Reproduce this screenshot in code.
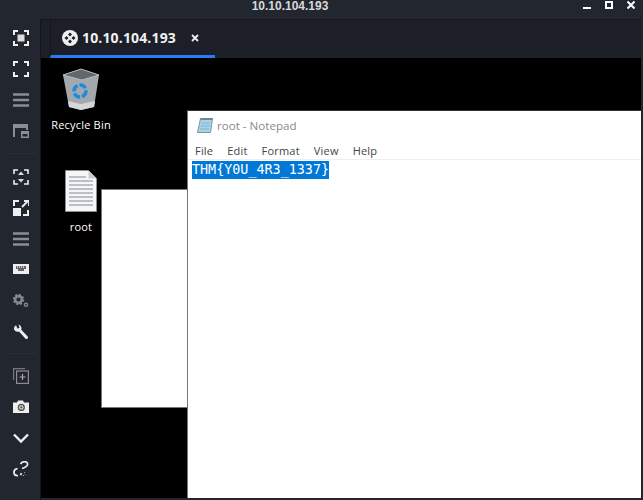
<div class="app">
	<header class="titlebar">
		<span class="titlebar__title">10.10.104.193</span>
		<div class="titlebar__controls">
			<svg width="10" height="10" viewBox="0 0 10 10"><rect x="1" y="7" width="8" height="2" fill="#fff" /></svg>
			<svg width="10" height="10" viewBox="0 0 10 10"><rect x="2" y="2" width="6" height="6" fill="none" stroke="#fff" stroke-width="2" /></svg>
			<svg width="10" height="10" viewBox="0 0 10 10"><path d="M1.500 1.500l7 7M8.500 1.500l-7 7" stroke="#fff" stroke-width="2" /></svg>
		</div>
	</header>

	<div class="main">
		<nav class="rail">
			<div class="rail__group">
				<svg class="ico" viewBox="0 0 16 16"><path d="M1 5V1h4M11 1h4v4M15 11v4h-4M5 15H1v-4" fill="none" stroke="#eee" stroke-width="2" /><rect x="4.500" y="4.500" width="7" height="7" fill="#ddd" /></svg>
				<svg class="ico" viewBox="0 0 16 16"><path d="M1 5V1h4M11 1h4v4M15 11v4h-4M5 15H1v-4" fill="none" stroke="#eee" stroke-width="2" /></svg>
				<svg class="ico" viewBox="0 0 16 16"><path d="M0 2.500h16M0 8h16M0 13.500h16" stroke="#8b8d92" stroke-width="2.400" /></svg>
				<svg class="ico" viewBox="0 0 16 16"><path d="M1 14V2h13v5" fill="none" stroke="#8b8d92" stroke-width="2" /><path d="M1 2h14v3H1z" fill="#8b8d92" /><rect x="8" y="8" width="8" height="7" fill="#8b8d92" /><rect x="9.500" y="11" width="5" height="2.500" fill="#22262f" /></svg>
			</div>
			<div class="rail__sep rail__sep--first"></div>
			<div class="rail__group">
				<svg class="ico" viewBox="0 0 16 16"><path d="M1 5V1h4M11 1h4v4M15 11v4h-4M5 15H1v-4" fill="none" stroke="#eee" stroke-width="1.600" /><path d="M8 2.500l3 3.500H5zM8 13.500L5 10h6z" fill="#ddd" /></svg>
				<svg class="ico" viewBox="0 0 16 16"><path d="M6 1H1v5M15 10v5h-5" fill="none" stroke="#eee" stroke-width="2" /><rect x="0" y="8" width="8" height="8" fill="#eee" /><path d="M9 7l6-6M11 1h5v5" fill="none" stroke="#eee" stroke-width="1.800" /></svg>
				<svg class="ico" viewBox="0 0 16 16"><path d="M0 2.500h16M0 8h16M0 13.500h16" stroke="#8b8d92" stroke-width="2.400" /></svg>
				<svg class="ico" viewBox="0 0 16 16"><rect x="0" y="2" width="16" height="10" fill="#eee" /><path d="M3 4h10v3h-2v2H5V7H3z" fill="#666" /><path d="M4.500 4v2M6.500 4v2M8.500 4v2M10.500 4v2" stroke="#ddd" stroke-width="0.800" /></svg>
				<svg class="ico" viewBox="0 0 16 16"><circle cx="5.500" cy="6.500" r="3.400" fill="none" stroke="#85878c" stroke-width="2.600" /><circle cx="5.500" cy="6.500" r="5" fill="none" stroke="#85878c" stroke-width="1.500" stroke-dasharray="2 1.900" /><circle cx="13" cy="11.800" r="1.600" fill="none" stroke="#85878c" stroke-width="1.400" /></svg>
				<svg class="ico" viewBox="0 0 16 16"><path d="M3 1.200a4 4 0 0 0-1.800 4.600 4 4 0 0 0 4.800 1.600l6.300 7a1.400 1.400 0 0 0 2.400-1.800L8.300 5.800A4 4 0 0 0 5.400.6L6.600 3.400 4.600 4.800z" fill="#eee" /></svg>
			</div>
			<div class="rail__sep rail__sep--second"></div>
			<div class="rail__group">
				<svg class="ico" viewBox="0 0 16 16"><path d="M0.600 12V0.600H12" fill="none" stroke="#77797f" stroke-width="1.200" /><rect x="3.600" y="3" width="11.800" height="12.400" fill="#22262f" stroke="#8b8d92" stroke-width="1.200" /><path d="M9.500 6v6M6.500 9h6" stroke="#aaa" stroke-width="1.200" /></svg>
				<svg class="ico" viewBox="0 0 16 16"><path d="M0 3.500h4l1-2h5l1 2h5V14H0z" fill="#eee" /><circle cx="8.300" cy="8.400" r="3.600" fill="#555" /><circle cx="8.300" cy="8.400" r="2.200" fill="#eee" /><circle cx="8.300" cy="8.400" r="1.200" fill="#555" /></svg>
				<svg class="ico" viewBox="0 0 16 16"><path d="M1 4.500l7 7 7-7" fill="none" stroke="#eee" stroke-width="2.400" /></svg>
				<svg class="ico" viewBox="0 0 16 16"><path d="M4.500 7.500C2 8 .8 10 1 11.800c.2 2 2 3 4 2.800M7.500 14.200l1-2M9 7.500c2.500-.8 5.500-2 5.600-4.200C14.700 1.500 13 .4 11 .6 9.400.8 8.300 1.600 7.500 3" fill="none" stroke="#eee" stroke-width="1.700" /><path d="M11 11.500h.8M12 13.500l.6.6M10.500 14v1" stroke="#bbb" stroke-width="1" /></svg>
			</div>
		</nav>

		<section class="session">
			<div class="tabs">
				<div class="tab">
					<svg width="16" height="16" viewBox="0 0 16 16"><circle cx="8" cy="8" r="8" fill="#eee" /><path d="M8 2.500l2 2-2 2-2-2zM8 9.500l2 2-2 2-2-2zM4.500 6l2 2-2 2-2-2zM11.500 6l2 2-2 2-2-2z" fill="#1c1f27" /></svg>
					<span class="tab__label">10.10.104.193</span>
					<svg class="tab__close" width="8" height="8" viewBox="0 0 8 8"><path d="M1 1l6 6M7 1L1 7" stroke="#eee" stroke-width="1.800" /></svg>
				</div>
			</div>

			<div class="desktop">
				<div class="shortcut shortcut--bin">
					<svg width="38" height="42" viewBox="0 0 38 42">
						<path d="M1 7L19 1l18 6-5 32-13 3-12-3z" fill="#a3a8ac" />
						<path d="M1 7l18-6 18 6-17 5z" fill="#62676b" stroke="#b4b8bb" stroke-width="1" />
						<path d="M6 33l13 3 14-3-1 6-13 3-12-3z" fill="#d4d6d8" />
						<circle cx="18" cy="23" r="6" fill="none" stroke="#1c8adf" stroke-width="3.400" stroke-dasharray="7 2" />
					</svg>
					<span>Recycle Bin</span>
				</div>
				<div class="shortcut shortcut--root">
					<svg width="32" height="42" viewBox="0 0 32 42">
						<path d="M.5.500h23l8 8v33H.5z" fill="#f5f6f8" stroke="#8b8e93" />
						<path d="M23.500.500v8h8z" fill="#c9ccd0" />
						<path d="M4 7h17M4 11h24M4 15h24M4 19h24M4 23h24M4 27h24M4 31h24M4 35h24" stroke="#a9adb8" stroke-width="1.400" />
					</svg>
					<span>root</span>
				</div>

				<div class="blank"></div>

				<div class="notepad">
					<div class="notepad__title">
						<svg width="16" height="16" viewBox="0 0 16 16">
							<path d="M3.500 1.500h12l-2 14H.5z" fill="#a9d3e6" stroke="#7d96a3" />
							<path d="M3.500 1h12v2h-12z" fill="#6f8794" />
							<path d="M4 6h9M3.500 9h9M3 12h9" stroke="#83b3cb" />
						</svg>
						<span>root - Notepad</span>
					</div>
					<div class="notepad__menu">
						<span>File</span><span>Edit</span><span>Format</span><span>View</span><span>Help</span>
					</div>
					<div class="notepad__body"><span class="selected">THM&#123;Y0U_4R3_1337&#125;</span></div>
				</div>
			</div>
		</section>
	</div>
</div>

<style>
	:global(body) {
		margin: 0;
		background: #22262f;
	}

	.app {
		width: 643px;
		height: 500px;
		display: flex;
		flex-direction: column;
		overflow: hidden;
		background: #22262f;
		font-family: 'Liberation Sans', sans-serif;
	}

	.titlebar {
		height: 19px;
		flex: none;
		position: relative;
		display: flex;
		justify-content: center;
		align-items: center;
		padding-right: 63px;
	}

	.titlebar__title {
		color: #d8d9db;
		font-size: 12px;
		font-weight: 700;
		margin-top: -7px;
	}

	.titlebar__controls {
		position: absolute;
		right: 7px;
		top: 0;
		display: flex;
		gap: 12px;
	}

	.main {
		flex: 1;
		display: flex;
		min-height: 0;
	}

	.rail {
		width: 41px;
		flex: none;
		display: flex;
		flex-direction: column;
		align-items: center;
		padding: 11px 0 0 1px;
		border-right: 1px solid #14161b;
		box-sizing: border-box;
	}

	.rail__group {
		display: flex;
		flex-direction: column;
		gap: 15px;
	}

	.rail__sep {
		width: 30px;
		height: 1px;
		background: #2a2e37;
	}

	.rail__sep--first {
		margin: 14px 0 15px;
	}

	.rail__sep--second {
		margin: 13px 0 14px;
	}

	.ico {
		width: 16px;
		height: 16px;
		display: block;
	}

	.session {
		flex: 1;
		display: flex;
		flex-direction: column;
		min-width: 0;
		margin-right: 2px;
		margin-bottom: 2px;
	}

	.tabs {
		height: 39px;
		flex: none;
		background: #1c1f27;
		border-top: 1px solid #14161b;
		box-sizing: border-box;
		padding-left: 9px;
	}

	.tab {
		width: 165px;
		height: 38px;
		box-sizing: border-box;
		border-left: 1px solid #14161b;
		border-bottom: 3px solid #2a7bf6;
		display: flex;
		align-items: center;
		padding-left: 11px;
		gap: 4px;
	}

	.tab__label {
		color: #f0f0f0;
		font-size: 14px;
		font-weight: 700;
		font-family: 'Open Sans', sans-serif;
		letter-spacing: 0.15px;
	}

	.tab__close {
		margin-left: 11px;
	}

	.desktop {
		flex: 1;
		position: relative;
		background: #000;
		overflow: hidden;
		font-family: 'Open Sans', sans-serif;
	}

	.shortcut {
		position: absolute;
		display: flex;
		flex-direction: column;
		align-items: center;
		color: #fff;
		font-size: 11px;
		line-height: 14px;
		letter-spacing: 0.2px;
	}

	.shortcut--bin {
		left: 10px;
		top: 10px;
		width: 60px;
		gap: 8px;
	}

	.shortcut--root {
		left: 10px;
		top: 112px;
		width: 60px;
		gap: 8px;
	}

	.blank {
		position: absolute;
		left: 60px;
		top: 131px;
		width: 120px;
		height: 219px;
		background: #fff;
		border: 1px solid #777;
		box-sizing: border-box;
	}

	.notepad {
		position: absolute;
		left: 146px;
		top: 52px;
		right: 0;
		bottom: 0;
		background: #fff;
		border-left: 1px solid #777;
		border-top: 1px solid #333;
		color: #333;
	}

	.notepad__title {
		height: 28px;
		display: flex;
		align-items: center;
		gap: 4px;
		padding-left: 9px;
		color: #8a8a8a;
		font-size: 11.6px;
	}

	.notepad__menu {
		height: 21px;
		box-sizing: border-box;
		padding: 2px 0 0 7px;
		display: flex;
		align-items: center;
		gap: 14px;
		font-size: 11px;
		letter-spacing: 0.2px;
		color: #444;
		border-bottom: 1px solid #eee;
	}

	.notepad__body {
		padding: 1px 0 0 4px;
		font-family: 'DejaVu Sans Mono', monospace;
		font-size: 13.4px;
		line-height: 18px;
	}

	.selected {
		display: inline-block;
		background: #0078d7;
		color: #fff;
	}
</style>
